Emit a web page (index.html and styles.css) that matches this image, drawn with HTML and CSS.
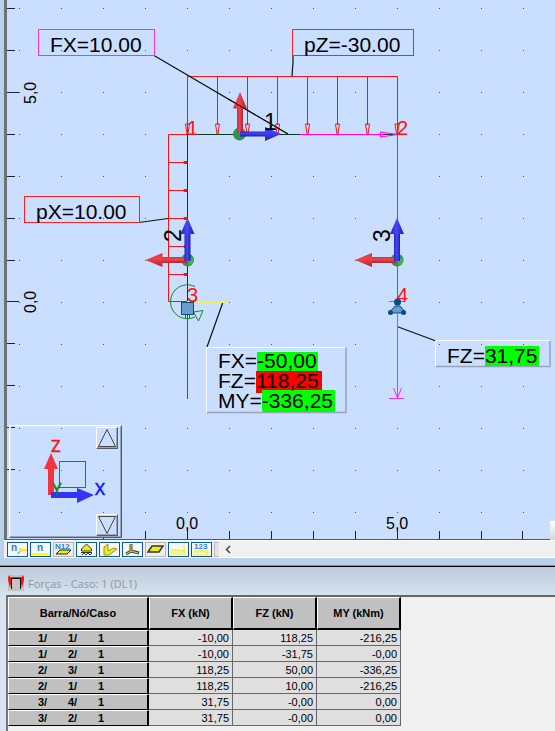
FILE: index.html
```html
<!DOCTYPE html>
<html lang="pt">
<head>
<meta charset="utf-8">
<title>Forças - Caso: 1 (DL1)</title>
<link rel="stylesheet" href="styles.css">
</head>
<body>
<main class="app">
  <section class="view">
    <div class="canvas">
      <svg class="scene" height="539" role="img" aria-label="Pórtico">
        <defs>
          <pattern id="grid" x="12" y="8" width="42" height="42" patternUnits="userSpaceOnUse">
            <rect width="1" height="1" fill="#3c48d8"/>
          </pattern>
          <linearGradient id="redUp"><stop offset="0" stop-color="#b8333d"/><stop offset=".45" stop-color="#f5404c"/><stop offset="1" stop-color="#a32a34"/></linearGradient>
          <linearGradient id="blueUp"><stop offset="0" stop-color="#2525b5"/><stop offset=".45" stop-color="#4646ff"/><stop offset="1" stop-color="#2020a0"/></linearGradient>
          <linearGradient id="redSide" x2="0" y2="1"><stop offset="0" stop-color="#c83842"/><stop offset=".4" stop-color="#f5404c"/><stop offset="1" stop-color="#a32a34"/></linearGradient>
          <linearGradient id="blueSide" x2="0" y2="1"><stop offset="0" stop-color="#2a2ac8"/><stop offset=".4" stop-color="#4040ff"/><stop offset="1" stop-color="#2020a0"/></linearGradient>
          <g id="triad">
            <circle r="6.5" fill="#2f9648"/><path d="M0 0l6-2.500q0 6-4 8z" fill="#43b45e"/>
            <path d="M0-3h-26v6H0z" fill="url(#redSide)"/><path d="M-25-7v14l-17-7z" fill="url(#redSide)"/>
            <path d="M-3 1v-28h6v28z" fill="url(#blueUp)"/><path d="M-7-26h14L0-42z" fill="url(#blueUp)"/>
          </g>
          <path id="down" d="M-2-10h4L.5 0h-1z" fill="none" stroke="#f11"/>
          <path id="right" d="M-19 0H0M-3-1h3v2h-3z" stroke="#f11" fill="#f11"/>
        </defs>
        <rect width="100%" height="520" fill="url(#grid)"/>
        <g transform="translate(-7 0)">
          <path class="ticks" d="M7 8.500h8M7 50.500h8M7 92.500h12M7 134.500h8M7 176.500h8M7 218.500h8M7 260.500h8M7 301.500h12M7 343.500h8M7 385.500h8M7 427.500h8M7 469.500h8M103.500 531v8M145.500 531v8M187.500 529v10M229.500 531v8M271.500 531v8M313.500 531v8M355.500 531v8M397.500 529v10M439.500 531v8M481.500 531v8M522.500 531v8"/>
          <g class="axis">
            <text transform="translate(36 104) rotate(-90)">5,0</text>
            <text transform="translate(36 313) rotate(-90)">0,0</text>
            <text x="176" y="529">0,0</text><text x="386" y="529">5,0</text>
          </g>

          <path d="M187.500 134.500V301M187 134.500h113" stroke="#0c3b20"/>
          <path d="M397.500 134V302" stroke="#467a68"/>
          <path d="M187.500 134V76.500h210V134M217.500 76v49M247.500 76v49M277.500 76v49M307.500 76v49M337.500 76v49M367.500 76v49" stroke="#f11" fill="none"/>
          <use href="#down" x="187.500" y="134"/><use href="#down" x="217.500" y="134"/><use href="#down" x="247.500" y="134"/><use href="#down" x="277.500" y="134"/><use href="#down" x="307.500" y="134"/><use href="#down" x="337.500" y="134"/><use href="#down" x="367.500" y="134"/><use href="#down" x="397" y="134"/>
          <path d="M187 134.500h-18.500v167H187" stroke="#f11" fill="none"/>
          <use href="#right" x="187" y="162.500"/><use href="#right" x="187" y="190.500"/><use href="#right" x="187" y="218.500"/><use href="#right" x="187" y="246.500"/><use href="#right" x="187" y="274.500"/>
          <path d="M300 134.500h97M380.500 132v5l17-2.500z" stroke="#f0f" fill="none"/><path d="M383 134.500h10" stroke="#333"/>

          <path d="M154 55.500L288 134M293 55v7l-1 14M139 222.500l29-4M223 302l-16 45M397 326.500l39 14.500" stroke="#111" fill="none" stroke-width="1.200"/>

          <g fill="none">
            <rect x="38.500" y="29.500" width="116" height="26" stroke="#f130e8"/>
            <rect x="292.500" y="29.500" width="121" height="26" stroke="#f22"/>
            <rect x="24.500" y="196.500" width="115" height="26" stroke="#f22"/>
          </g>
          <g class="label">
            <text x="50" y="52">FX=10.00</text><text x="304" y="52">pZ=-30.00</text><text x="36" y="219">pX=10.00</text>
          </g>

          <circle cx="239.500" cy="134" r="6.500" fill="#2f9648"/>
          <path d="M237 134v-27h6v27z" fill="url(#redUp)"/><path d="M233 108.500h14L240 92z" fill="url(#redUp)"/>
          <path d="M240 131.500h26v5h-26z" fill="url(#blueSide)"/><path d="M265 127v14l16-7z" fill="url(#blueSide)"/>
          <path d="M228 98.800L288 134" stroke="#111"/>
          <path d="M187.500 315v84" stroke="#e01224"/><path d="M185.500 314v5M189.500 314v5" stroke="#e01224"/>
          <path d="M194 302h34" stroke="#f2ee55" stroke-width="2"/>
          <path d="M195 286.500A17 17 0 1 0 195 317M193.500 312l9.500-1.500-4.500 10.500z" stroke="#148a24" fill="none"/>
          <use href="#triad" x="187.500" y="260"/><use href="#triad" x="397" y="260"/>
          <rect x="181.500" y="302.500" width="12" height="12" fill="#6a9cd0" stroke="#0d4a86"/>

          <path d="M389 301.500h16M397.500 314v84M389 398.500h15M393.500 388l4 10 4-10" stroke="#f42df4" fill="none"/>
          <path d="M395 306h5l6 7h-17z" fill="#6a9cd0" stroke="#0d4a86"/>
          <g fill="#0d4a86"><circle cx="397.500" cy="302" r="3.500"/><circle cx="390.500" cy="312.500" r="2.500"/><circle cx="403.500" cy="312.500" r="2.500"/></g>

          <g class="node"><text x="187" y="135">1</text><text x="397" y="135">2</text><text x="187" y="302">3</text><text x="397" y="302">4</text></g>
          <g class="member"><text x="264" y="130">1</text><text transform="translate(181 242) rotate(-90)">2</text><text transform="translate(390 242) rotate(-90)">3</text></g>

          <g fill="none">
            <path d="M206.500 412V347.500h140" stroke="#f8faff"/><path d="M207 412.500h139V347" stroke="#98a4b8" stroke-width="1.500"/>
            <path d="M435.500 366V340.500h115" stroke="#f8faff"/><path d="M436 366.500h114V341" stroke="#98a4b8" stroke-width="1.500"/>
          </g>
          <rect x="257" y="352" width="61" height="19" fill="#0f0"/><rect x="256" y="371" width="66" height="22" fill="#f00"/><rect x="262" y="390" width="73" height="22" fill="#0f0"/><rect x="485" y="346" width="54" height="20" fill="#0f0"/>
          <g class="label">
            <text x="218" y="368">FX=-50,00</text><text x="218" y="388">FZ=118,25</text><text x="218" y="408">MY=-336,25</text><text x="447" y="363">FZ=31,75</text>
          </g>
        </g>
      </svg>

      <div class="orbit">
        <svg class="compass" width="86" height="109" aria-hidden="true">
          <rect x="49.500" y="34.500" width="26" height="26" fill="none" stroke="#148a24"/>
          <path d="M38 68V42h-4l7-16 7 16h-4v26z" fill="#f5333f"/>
          <path d="M41 65h26v-4l17 7-17 8v-5H41z" fill="#3333ff"/>
          <g class="letters"><text x="41" y="25" fill="#f11" stroke="#f11">Z</text><text x="42" y="68" fill="#118022" stroke="#118022">Y</text><text x="85" y="68" fill="#11f" stroke="#11f">X</text></g>
        </svg>
        <div class="spin">
          <button class="bevel" aria-label="Subir"><svg width="20" height="20"><path d="M10 1.500l8.500 17h-17z" fill="none" stroke="#444"/></svg></button>
          <button class="bevel" aria-label="Descer"><svg width="20" height="20"><path d="M10 18.500L1.500 1.500h17z" fill="none" stroke="#444"/></svg></button>
        </div>
      </div>
      <div class="corner"></div>
    </div>
    <div class="toolbar">
      <button class="tool on" aria-label="Números dos nós"><svg width="19" height="13"><text x="3" y="8">n</text><path d="M10 11l3-4h6" stroke="#77772a" fill="none"/><path d="M13 7h6" stroke="#ee1" stroke-width="2"/><circle cx="13" cy="7" r="2" fill="#ee1"/></svg></button>
      <button class="tool on" aria-label="Números das barras"><svg width="19" height="13"><text x="6" y="8">n</text><path d="M1 11h16" stroke="#ff0" stroke-width="2"/></svg></button>
      <button class="tool" aria-label="Nomes dos perfis"><svg width="19" height="13"><path d="M2 11l4-4h11l-4 4z" fill="#ee1" stroke="#222"/><text class="tiny" x="1" y="6">N12</text></svg></button>
      <button class="tool on" aria-label="Apoios"><svg width="19" height="13"><path d="M9.500 1l5 5v2h-10V6z" fill="#ee1" stroke="#333"/><path d="M4 9.500h11M5 12l2-2 2 2 2-2 2 2 2-2" stroke="#333" fill="none"/></svg></button>
      <button class="tool on" aria-label="Forma dos perfis"><svg width="19" height="13"><path d="M4 4l4-3v7l6-3 3 1-8 6H4z" fill="#ee1" stroke="#99921f"/></svg></button>
      <button class="tool on" aria-label="Sistemas locais"><svg width="19" height="13"><path d="M8 1v7l8 2M8 8l-5 3" stroke="#444" stroke-width="3" fill="none"/><path d="M8 1v7l7 2M8 8l-5 3" stroke="#dd3" fill="none"/></svg></button>
      <button class="tool" aria-label="Painéis"><svg width="19" height="13"><path d="M2 9l4-6h11l-4 6z" fill="#ee1" stroke="#333" stroke-width="1.500"/></svg></button>
      <button class="tool on" aria-label="Cargas"><svg width="19" height="13"><path d="M1 11h16M3 10V7M6 10V7M9 10V7M12 10V7M15 9V2M13 7l2 3 2-3M2 7h10" stroke="#f4f000" fill="none"/></svg></button>
      <button class="tool on" aria-label="Valores das cargas"><svg width="19" height="13"><path d="M1 12h16M3 11V8M6 11V8M9 11V8M12 11V8M15 10V5M13 8l2 3 2-3M2 8h10" stroke="#f4f000" fill="none"/><text class="tiny" x="2" y="6">123</text></svg></button>
      <span class="grip"></span>
      <button class="scroll" aria-label="Rolar para a esquerda"><svg width="8" height="9"><path d="M6 1L2.500 4.500 6 8" fill="none" stroke="#444" stroke-width="1.500"/></svg></button>
    </div>
  </section>

  <section class="forces">
    <h1 class="title">
      <svg width="16" height="16" aria-hidden="true"><path fill="#c4c4c4" d="M0 0h16v16H0z"/><path d="M0 2l2-2v2h12V0l2 2v3l-2 8-2-9H4L2 13 0 5z" fill="#f11"/><path d="M3.500 14V3.500h9V14" fill="none" stroke="#111"/></svg>
      Forças - Caso: 1 (DL1)
    </h1>
    <div class="sheet">
      <table>
        <thead><tr><th class="key">Barra/Nó/Caso</th><th>FX (kN)</th><th>FZ (kN)</th><th>MY (kNm)</th></tr></thead>
        <tbody>
          <tr><th><span>1/</span><span>1/</span><span>1</span></th><td>-10,00</td><td>118,25</td><td>-216,25</td></tr>
          <tr><th><span>1/</span><span>2/</span><span>1</span></th><td>-10,00</td><td>-31,75</td><td>-0,00</td></tr>
          <tr><th><span>2/</span><span>3/</span><span>1</span></th><td>118,25</td><td>50,00</td><td>-336,25</td></tr>
          <tr><th><span>2/</span><span>1/</span><span>1</span></th><td>118,25</td><td>10,00</td><td>-216,25</td></tr>
          <tr><th><span>3/</span><span>4/</span><span>1</span></th><td>31,75</td><td>-0,00</td><td>0,00</td></tr>
          <tr><th><span>3/</span><span>2/</span><span>1</span></th><td>31,75</td><td>-0,00</td><td>0,00</td></tr>
        </tbody>
      </table>
    </div>
  </section>
</main>
</body>
</html>
```
FILE: styles.css
```css
* { box-sizing: border-box; }
body { margin: 0; font-family: "Liberation Sans", Arial, sans-serif; background: #b9d1ea; }
button { margin: 0; padding: 0; }
svg { display: block; }

.app { display: flex; flex-direction: column; min-height: 100vh; }

.view { padding-left: 4px; padding-bottom: 8px; background: #b9d1ea; }
.canvas {
  position: relative;
  background: #cadeff;
  border-left: 3px solid #6d7278;
  border-bottom: 1px solid #505868;
}
.scene { width: 100%; height: 539px; }
.ticks { stroke: #1c2430; fill: none; }
.axis { font-size: 16px; }
.label { font-size: 21px; }
.node { font-size: 20px; fill: #f11; }
.member { font-size: 23px; }

.orbit {
  position: absolute;
  left: 2px;
  bottom: 1px;
  display: flex;
  padding: 1px 3px 1px 0;
  border: 1px solid;
  border-color: #fff #555c68 #555c68 #fff;
  box-shadow: inset -1px -1px #98a4b8, inset 1px 1px #dde6f4;
}
.compass { overflow: visible; }
.spin { display: flex; flex-direction: column; justify-content: space-between; }
.bevel {
  background: #cadeff;
  border: 1px solid;
  border-color: #fff #555c68 #555c68 #fff;
  box-shadow: inset -1px -1px #98a4b8;
}
.letters { font: 17px "Noto Sans", sans-serif; stroke-width: 0.5; }
.corner {
  position: absolute;
  right: 0;
  bottom: -1px;
  width: 5px;
  height: 19px;
  background: linear-gradient(#fff, #d6d6d6);
}

.toolbar {
  display: flex;
  align-items: center;
  gap: 2px;
  height: 18px;
  padding-left: 3px;
  background: #f0f0f0;
  border-top: 1px solid #fff;
  border-bottom: 1px solid #fff;
}
.tool { width: 21px; height: 15px; border: 1px solid #b4b4b4; background: #eee; }
.tool.on { border-color: #0b5a9d; background: #f4f8fc; }
.tool text { font: bold 10px "Liberation Sans", sans-serif; fill: #1c86d6; }
.tool .tiny { font-size: 8px; }
.grip { width: 5px; height: 15px; border: 1px solid #bbb; border-right: 0; background: #e4e4e4; }
.scroll { margin-left: 3px; border: 0; background: none; }

.forces {
  flex: 1;
  display: flex;
  flex-direction: column;
  padding-left: 6px;
  border-top: 1px solid #000;
  box-shadow: 0 -1px #2fb3c8;
  background: linear-gradient(#bdcbd8, #d7e4f2 30px);
}
.title {
  display: flex;
  align-items: center;
  gap: 4px;
  height: 28px;
  margin: 0;
  padding: 4px 2px 0;
  font: 11px "Open Sans", sans-serif;
  color: #8e969f;
}
.sheet { flex: 1; background: #f0f0f0; border-top: 2px solid #666; border-left: 2px solid #777; }

table { border-collapse: separate; border-spacing: 0; font-size: 11px; line-height: 12px; }
th, td { width: 84px; height: 16px; padding: 0 3px; border: 1px solid #666; border-width: 0 1px 1px 0; }
td { text-align: right; background: #dfdfdf; }
th { background: #c0c0c0; border-width: 1px; border-color: #fff #000 #000 #fff; }
thead th { height: 33px; border-right-width: 2px; border-bottom-width: 2px; }
.key { width: 141px; }
tbody th { padding-left: 29px; text-align: left; white-space: nowrap; border-right-width: 2px; }
tbody th span { display: inline-block; width: 30px; }
```
